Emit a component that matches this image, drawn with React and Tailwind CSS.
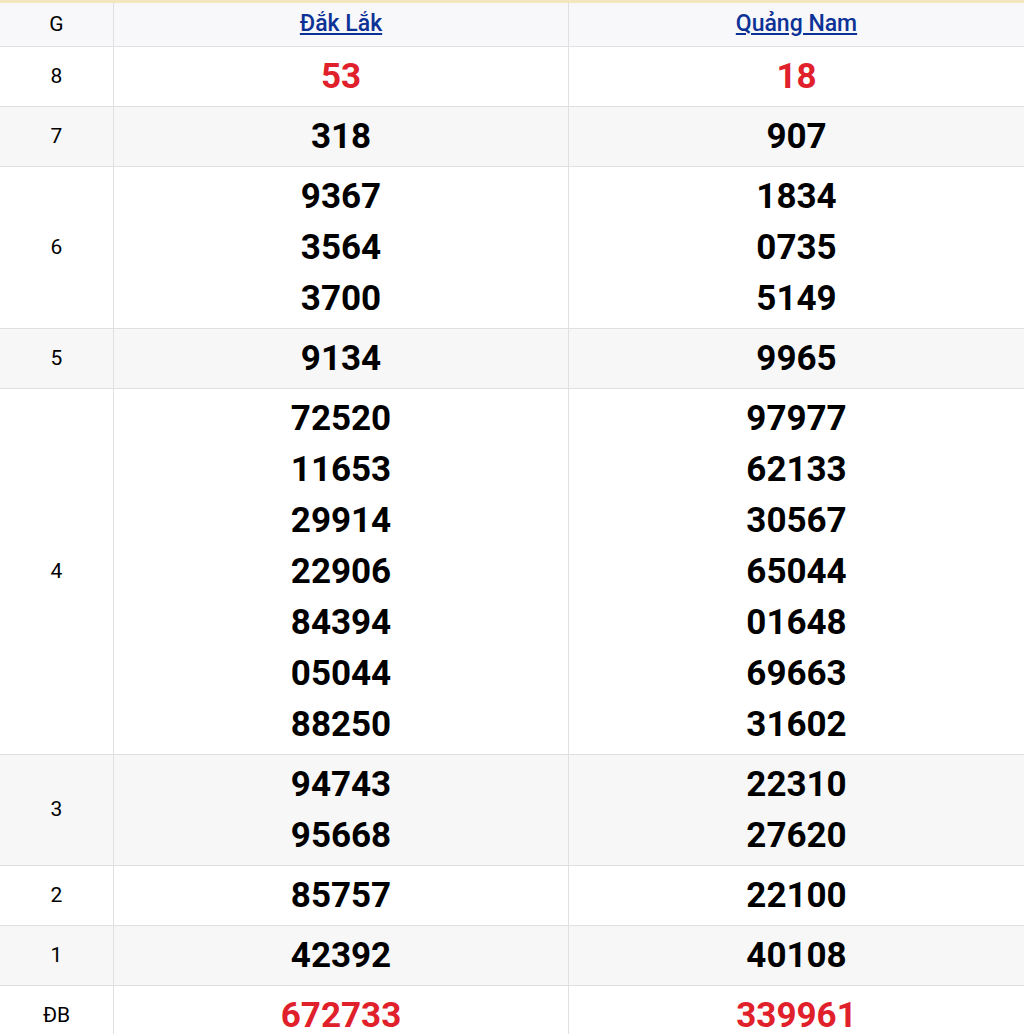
import React from "react";

const rows = [
  { g: "8", a: ["53"], b: ["18"], red: true },
  { g: "7", a: ["318"], b: ["907"] },
  { g: "6", a: ["9367", "3564", "3700"], b: ["1834", "0735", "5149"] },
  { g: "5", a: ["9134"], b: ["9965"] },
  {
    g: "4",
    a: ["72520", "11653", "29914", "22906", "84394", "05044", "88250"],
    b: ["97977", "62133", "30567", "65044", "01648", "69663", "31602"],
  },
  { g: "3", a: ["94743", "95668"], b: ["22310", "27620"] },
  { g: "2", a: ["85757"], b: ["22100"] },
  { g: "1", a: ["42392"], b: ["40108"] },
  { g: "ĐB", a: ["672733"], b: ["339961"], red: true },
];

export default function App() {
  return (
    <div
      className="w-[1024px] bg-white"
      style={{ fontFamily: "Roboto, 'Noto Sans', Arial, sans-serif" }}
    >
      <div className="border-t-[3px] border-[#f3e7be]">
        <div className="grid grid-cols-[114px_1fr_1fr] bg-[#f8f8fa] border-b border-[#e0e0e3] h-[44px]">
          <div className="flex items-center justify-center border-r border-[#e0e0e3] text-[21px] text-black">
            G
          </div>
          <div className="flex items-center justify-center border-r border-[#e0e0e3]">
            <a href="#" className="text-[23px] font-medium text-[#0d3296] underline underline-offset-2">
              Đắk Lắk
            </a>
          </div>
          <div className="flex items-center justify-center">
            <a href="#" className="text-[23px] font-medium text-[#0d3296] underline underline-offset-2">
              Quảng Nam
            </a>
          </div>
        </div>
        {rows.map((r, i) => (
          <div
            key={r.g}
            className={
              "grid grid-cols-[114px_1fr_1fr] border-b border-[#e0e0e3] " +
              (i % 2 === 1 ? "bg-[#f7f7f8]" : "bg-white")
            }
          >
            <div className="flex items-center justify-center border-r border-[#e0e0e3] text-[21px] text-black">
              {r.g}
            </div>
            <div className="flex flex-col items-center justify-center border-r border-[#e0e0e3] py-1">
              {r.a.map((n, k) => (
                <div
                  key={k}
                  className={
                    "text-[35px] font-bold leading-[51px] " +
                    (r.red ? "text-[#e0202a]" : "text-black")
                  }
                >
                  {n}
                </div>
              ))}
            </div>
            <div className="flex flex-col items-center justify-center py-1">
              {r.b.map((n, k) => (
                <div
                  key={k}
                  className={
                    "text-[35px] font-bold leading-[51px] " +
                    (r.red ? "text-[#e0202a]" : "text-black")
                  }
                >
                  {n}
                </div>
              ))}
            </div>
          </div>
        ))}
      </div>
    </div>
  );
}
